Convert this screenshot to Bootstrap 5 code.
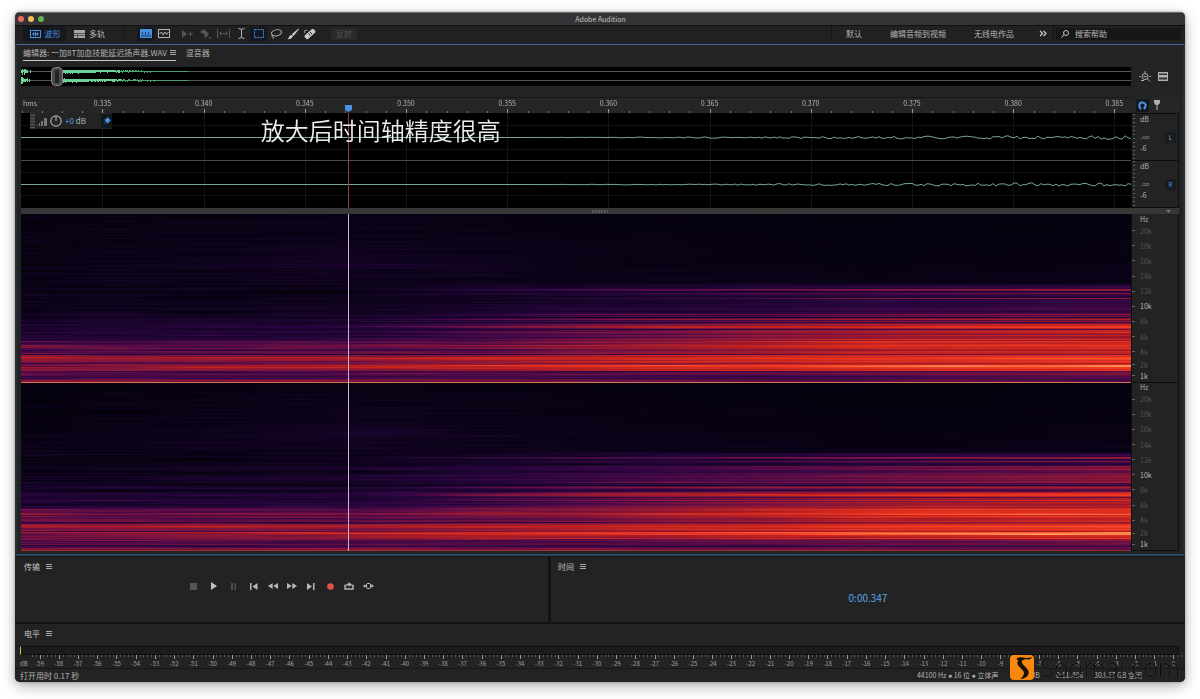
<!DOCTYPE html>
<html lang="zh-CN">
<head>
<meta charset="utf-8">
<meta name="viewport" content="width=device-width, initial-scale=1">
<title>Adobe Audition</title>
<link rel="stylesheet" href="https://cdn.jsdelivr.net/npm/bootstrap@5.3.0/dist/css/bootstrap.min.css">
<style>
  :root { --panel:#232323; --edge:#141414; --ink:#b4b4b4; --dim:#555; --blue:#4b8fe0; }
  body { background:#fff; color:var(--ink); font:8px/12px "Noto Sans CJK SC","Noto Sans",sans-serif; min-height:100vh; padding:12px 15px 17px; display:flex; }
  .app { flex:1; min-width:0; background:var(--edge); border-radius:5px; overflow:hidden; }
  .app-shadow { border-radius:5px; box-shadow:0 4px 14px rgba(0,0,0,.32),0 0 3px rgba(0,0,0,.3); }
  .titlebar { height:13px; background:#353336; border-top:1px solid #6a696b; color:#c4c4c4; font-size:7px; line-height:11px; padding-left:3px; }
  .titlebar .title { padding-right:28px; }
  .dot { width:6px; height:6px; border-radius:50%; }
  .toolbar { height:19px; background:#212121; border-top:1px solid #111; padding-bottom:3px; }
  button { border:0; background:none; color:inherit; padding:0; display:inline-flex; align-items:center; justify-content:center; }
  svg { display:block; flex:none; }
  .mode { height:15px; gap:4px; font-size:8px; }
  .mode.on { background:#15181d; color:var(--blue); width:42px; }
  .tool { width:18px; height:14px; }
  .tool.slim { width:17px; }
  .tool.on { background:#121820; color:var(--blue); }
  .off { color:#555; }
  .vline { width:1px; align-self:stretch; background:#161616; }
  .ghost { width:26px; height:12px; background:#2a2a2a; color:#565656; border-radius:2px; }
  .spaces { gap:28px; }
  .find { width:125px; height:12px; background:#171717; padding-left:5px; gap:6px; }
  .find input { background:none; border:0; outline:0; color:#ccc; font:inherit; width:90px; padding:0; }
  .find input::placeholder { color:#bbb; opacity:1; }
  .editor { background:var(--panel); border:2px solid #22313e; border-top:1px solid #42679c; border-bottom-color:#2b4961; padding:0 4px 3px; }
  .tabs { height:22px; gap:10px; padding-left:2px; }
  .tab-on { border-bottom:1px solid #c8c8c8; height:16px; gap:3px; }
  .tabs a, .tabs a:hover { color:inherit; text-decoration:none; line-height:14px; }
  .lane { display:grid; grid-template-columns:minmax(0,1fr) 48px; }
  .plot { position:relative; min-width:0; overflow:hidden; }
  .plot canvas { position:absolute; inset:0; width:100%; height:100%; }
  .overview { height:19px; }
  .ruler { height:16px; margin-top:11px; background:#262626; }
  .ruler .plot { border-top:1px solid #181818; }
  .marks { position:relative; display:flex; line-height:11px; }
  .marks span { width:9.117%; flex:none; text-align:center; font-size:7px; }
  .marks .unit { width:2.78%; text-align:left; padding-left:2px; }
  .wave { height:95px; }
  .scale { border:1px solid #0c0c0c; background:var(--panel); }
  .scale > div { flex:1 1 0; }
  .scale > div + div { border-top:1px solid #0c0c0c; }
  .db { padding-left:8px; line-height:11px; font-size:7px; background:repeating-linear-gradient(#666 0 1px,transparent 1px 4px) 1px 0/2px 100% no-repeat; }
  .db .inf { margin-top:7px; color:#888; }
  .chan { width:11px; height:11px; background:#171b22; color:#9aa8bd; font-size:6px; margin-right:2px; }
  .chan.r { color:#5a8be0; }
  .hud { position:relative; width:82px; height:16px; margin-left:9px; background:#232323; }
  .grip { width:5px; height:16px; background:repeating-linear-gradient(#333 0 2px,#555 2px 3px); }
  .caption { position:absolute; left:21.6%; top:0; font-size:24px; line-height:34px; font-weight:350; color:#ededed; white-space:nowrap; }
  .splitter { height:6px; background:#373737; color:#777; }
  .nub { width:16px; height:3px; background:repeating-linear-gradient(90deg,#555 0 2px,#3c3c3c 2px 3px); }
  .spectral { flex:1 0 336px; }
  .hz { display:flex; flex-direction:column; padding-left:8px; font-size:7px; line-height:8px; color:var(--dim); }
  .hz span { flex:15 1 0; display:flex; align-items:center; position:relative; }
  .hz span::before { content:""; width:3px; height:1px; background:#666; margin:0 5px 0 -8px; }
  .hz .head { flex:9 1 0; color:var(--ink); }
  .hz .head::before { background:none; }
  .hz .low { flex:11 1 0; }
  .hz .lit { color:#bdbdbd; }
  .docks { height:65px; gap:3px; margin-top:1px; }
  .dock { background:var(--panel); }
  .dock-title { padding:4px 0 0 9px; gap:6px; color:#c4c4c4; }
  .transport { gap:1px; padding-left:169px; margin-top:7px; }
  .transport button { width:19px; height:12px; }
  .transport button:nth-child(n+5) { width:18px; }
  .clock { color:#5ba3ec; font-size:10px; line-height:14px; margin-top:18px; text-align:center; }
  .levels { background:var(--panel); margin-top:2px; }
  .meter { height:9px; background:#1b1b1b; border:1px solid #0e0e0e; margin:6px 6px 0 5px; border-left:1px solid #c9c03a; }
  .dbruler { padding:0 2px 0 5px; }
  .dbruler .plot { height:4px; }
  .dbmarks { display:flex; font-size:6px; line-height:9px; color:#a0a0a0; }
  .dbmarks span { flex:1 1 0; text-align:center; min-width:0; }
  .dbmarks .unit { flex:none; width:10px; text-align:left; }
  .status { height:14px; background:var(--panel); border-top:1px solid #171717; padding:0 43px 0 5px; }
  .facts { font-size:7px; }
  .bullet { font-family:"Liberation Sans",sans-serif; }
  .brand { position:absolute; right:5px; bottom:2px; gap:6px; }
  .brand-name { font:300 25px/26px "Noto Sans","Noto Sans CJK SC",sans-serif; color:#080808; opacity:.85; text-shadow:0 0 1px #666; }
</style>
</head>
<body>
<div class="d-flex flex-fill app-shadow position-relative">
<main class="app d-flex flex-column">
  <header class="titlebar d-flex align-items-center">
    <div class="d-flex" style="gap:4px">
      <span class="dot" style="background:#ec6a5e"></span><span class="dot" style="background:#f4bf61"></span><span class="dot" style="background:#62b656"></span>
    </div>
    <div class="title flex-fill text-center">Adobe Audition</div>
  </header>

  <nav class="toolbar d-flex align-items-center" aria-label="工具栏">
    <div class="vline ms-2"></div>
    <button class="mode on"><svg width="11" height="8" viewBox="0 0 11 8" fill="none" stroke="currentColor"><rect x=".5" y=".5" width="10" height="7"/><path d="M2 4h7M3.500 2.500v3M5.500 1.500v5M7.500 2.500v3"/></svg>波形</button>
    <button class="mode ms-2"><svg width="11" height="8" viewBox="0 0 11 8"><path fill="#a8a8a8" d="M0 0h11v8H0z"/><path stroke="#555" d="M0 3.500h11M0 5.500h11M3.500 3v5"/></svg>多轨</button>
    <div class="vline" style="margin-left:19px"></div>
    <div class="d-flex" style="margin-left:12px">
      <button class="tool on" aria-label="频谱"><svg width="12" height="9" viewBox="0 0 12 9"><path fill="currentColor" d="M0 0h12v9H0z"/><path fill="#2a5fa6" d="M1 5.500h10V8H1z"/><path stroke="#173a69" d="M2.500 3v2M5.500 3v2M8.500 3v2"/></svg></button>
      <button class="tool" aria-label="音高"><svg width="12" height="9" viewBox="0 0 12 9" fill="none" stroke="currentColor"><rect x=".5" y=".5" width="11" height="8"/><path d="M1.500 5l2-2 1.500 3 2-3 1.500 2.500L10.500 3"/></svg></button>
    </div>
    <div class="d-flex" style="margin-left:5px">
      <button class="tool off" aria-label="移动"><svg width="13" height="10" viewBox="0 0 13 10" fill="currentColor"><path d="M1 1l5 4-5 4zM7 4.500h5v1H7z"/><path d="M9 2.500h1v5H9z"/></svg></button>
      <button class="tool off" aria-label="切断"><svg width="12" height="11" viewBox="0 0 12 11"><path fill="currentColor" d="M1 4l4-3 5 5-3 4-2-2 1-1zM9 9h3v2z"/></svg></button>
      <button class="tool off" aria-label="滑动"><svg width="13" height="9" viewBox="0 0 13 9" fill="none" stroke="currentColor"><path d="M.5 0v9M12.500 0v9M2 4.500h9M4.500 2.500l-2 2 2 2M8.500 2.500l2 2-2 2"/></svg></button>
      <button class="tool" aria-label="时间选择"><svg width="7" height="11" viewBox="0 0 7 11" fill="none" stroke="currentColor"><path d="M.5.5Q3.500.5 3.500 2.500v6q0 2-3 2M6.500.5q-3 0-3 2M3.500 8.500q0 2 3 2"/></svg></button>
    </div>
    <div class="d-flex">
      <button class="tool slim on" aria-label="框选"><svg width="10" height="9" viewBox="0 0 10 9" fill="none" stroke="currentColor"><rect x=".5" y=".5" width="9" height="8" stroke-dasharray="2 1"/></svg></button>
      <button class="tool slim" aria-label="套索"><svg width="12" height="10" viewBox="0 0 12 10" fill="none" stroke="currentColor"><ellipse cx="6.500" cy="3.800" rx="5" ry="3" transform="rotate(-12 6.500 3.800)"/><path d="M2.500 6q-1.500 1.500.5 2t-.5 2"/></svg></button>
      <button class="tool slim" aria-label="画笔"><svg width="12" height="12" viewBox="0 0 12 12" fill="#d0d0d0"><path d="M11.500.5L12 1 6.500 8 4.800 6.300zM4.200 6.800l1.800 1.800Q4.500 11.500.5 11.200 2.500 9.500 2.500 8z"/></svg></button>
      <button class="tool slim" aria-label="污点修复"><svg width="12" height="12" viewBox="0 0 12 12"><rect x="3.500" y="0" width="5" height="12" rx="1.500" fill="#c8c8c8" transform="rotate(48 6 6)"/><path stroke="#222" d="M4.500 5.500l2 2M6 4l2 2"/><path d="M.5 5V2.500h3" stroke="#888" fill="none"/></svg></button>
    </div>
    <button class="ghost" style="margin-left:13px" disabled>反转</button>
    <div class="d-flex align-items-center ms-auto spaces align-self-stretch">
      <div class="vline" style="margin-right:-14px"></div>
      <a class="text-reset text-decoration-none" href="#">默认</a>
      <a class="text-reset text-decoration-none" href="#">编辑音频到视频</a>
      <a class="text-reset text-decoration-none" href="#">无线电作品</a>
    </div>
    <button style="margin:0 6px 0 25px" aria-label="更多工作区"><svg width="8" height="7" viewBox="0 0 8 7" fill="none" stroke="#ccc" stroke-width="1.200"><path d="M1 1l2.500 2.500L1 6M4.500 1l2.500 2.500L4.500 6"/></svg></button>
    <div class="vline"></div>
    <label class="find d-flex align-items-center" style="margin:0 4px 0 2px"><svg width="8" height="8" viewBox="0 0 8 8" fill="none" stroke="#c0c0c0"><circle cx="5" cy="3" r="2.500"/><path d="M3.200 4.800L.5 7.700"/></svg><input type="text" placeholder="搜索帮助" aria-label="搜索帮助"></label>
  </nav>

  <section class="editor d-flex flex-column flex-fill">
    <div class="tabs d-flex">
      <div class="tab-on d-flex align-items-center"><a href="#">编辑器: 一加8T加血技能延迟扬声器.WAV</a><button aria-label="菜单"><svg width="6" height="6" viewBox="0 0 6 6" stroke="#aaa"><path d="M0 .5h6M0 2.500h6M0 4.500h6"/></svg></button></div>
      <a href="#" style="padding-top:1px">混音器</a>
    </div>

    <div class="lane overview">
      <div class="plot"><canvas id="overview"></canvas></div>
      <div class="d-flex align-items-center" style="gap:7px;padding-left:8px">
        <button aria-label="全部缩小"><svg width="12" height="11" viewBox="0 0 12 11" fill="none" stroke="#b0b0b0"><circle cx="6" cy="5.500" r="3"/><path d="M8 7.500l3 3M4.500 5.500h3M0 5.500h1.500M10.500 5.500H12M6 0v2M2 9.500h3"/></svg></button>
        <button aria-label="视图列表"><svg width="10" height="9" viewBox="0 0 10 9"><path fill="#b0b0b0" d="M0 0h10v9H0z"/><path fill="#333" d="M1 1.500h8v1.500H1zM1 5.500h8v2H1z"/></svg></button>
      </div>
    </div>

    <div class="lane ruler">
      <div class="plot"><canvas id="ruler"></canvas><div class="marks" id="times"><span class="unit">hms</span></div></div>
      <div class="d-flex align-items-center" style="gap:2px;padding-left:5px">
        <button class="tool on" style="width:13px;height:13px" aria-label="对齐"><svg width="9" height="9" viewBox="0 0 9 9"><path d="M3 8Q.8 6 1.500 3.500T4.500 1.500t3 2T6 8" fill="none" stroke="currentColor" stroke-width="2.200"/></svg></button>
        <button class="tool" style="width:11px" aria-label="标记"><svg width="6" height="10" viewBox="0 0 6 10" fill="#b0b0b0"><path d="M0 0h6v3L4 5H2L0 3zM2.500 5h1v5h-1z"/></svg></button>
      </div>
    </div>

    <div class="lane wave">
      <div class="plot bg-black"><canvas id="wave"></canvas>
        <div class="hud d-flex align-items-center">
          <span class="grip" style="margin-right:2px"></span>
          <svg width="10" height="9" viewBox="0 0 10 9" fill="#777"><path d="M0 8h1v1H0zM2 6h1v3H2zM4 4h2v5H4zM7 1h3v8H7z"/></svg>
          <svg style="margin-left:3px" width="12" height="12" viewBox="0 0 12 12" fill="none" stroke="#a8a8a8" stroke-width="1.200"><circle cx="6" cy="6" r="5.200"/><path d="M6 1v5"/></svg>
          <span style="margin-left:3px"><span style="color:#5ba3ec">+0</span> dB</span>
          <button class="tool on ms-auto" style="width:11px" aria-label="固定"><svg width="8" height="8" viewBox="0 0 8 8" fill="currentColor"><path d="M4.500 0L8 3.500l-1 .5-1.500 1.500v1.500L3.300 5 0 8l2.800-3.500L1 2.500h1.500L4 1z"/></svg></button>
        </div>
        <div class="caption">放大后时间轴精度很高</div>
      </div>
      <div class="scale d-flex flex-column">
        <div class="db d-flex justify-content-between align-items-center"><div class="align-self-start"><div>dB</div><div class="inf">-∞</div><div>-6</div></div><button class="chan">L</button></div>
        <div class="db d-flex justify-content-between align-items-center"><div class="align-self-start"><div>dB</div><div class="inf">-∞</div><div>-6</div></div><button class="chan r">R</button></div>
      </div>
    </div>

    <div class="splitter d-flex align-items-center justify-content-center position-relative"><span class="nub"></span>
      <svg class="position-absolute end-0 me-2" width="5" height="3" viewBox="0 0 5 3"><path fill="#777" d="M0 0h5L2.500 3z"/></svg></div>

    <div class="lane spectral">
      <div class="plot bg-black"><canvas id="spectrum"></canvas></div>
      <div class="scale d-flex flex-column border-top-0"><div class="hz"></div><div class="hz"></div></div>
    </div>
  </section>

  <div class="docks d-flex">
    <section class="dock" style="flex:533 1 0">
      <div class="dock-title d-flex align-items-center">传输<button aria-label="菜单"><svg width="6" height="6" viewBox="0 0 6 6" stroke="#aaa"><path d="M0 .5h6M0 2.500h6M0 4.500h6"/></svg></button></div>
      <div class="transport d-flex">
        <button aria-label="停止"><svg width="7" height="7"><path fill="#555" d="M0 0h7v7H0z"/></svg></button>
        <button aria-label="播放"><svg width="6" height="8"><path fill="#c0c0c0" d="M0 0l6 4-6 4z"/></svg></button>
        <button aria-label="暂停"><svg width="5" height="7"><path fill="#505050" d="M0 0h2v7H0zM3.500 0h2v7h-2z"/></svg></button>
        <button aria-label="到开头"><svg width="8" height="7"><path fill="#b8b8b8" d="M0 0h1.500v7H0zM7.500 0v7L2.500 3.500z"/></svg></button>
        <button aria-label="快退"><svg width="10" height="6"><path fill="#b8b8b8" d="M4.700 0v6L0 3zM10 0v6L5.300 3z"/></svg></button>
        <button aria-label="快进"><svg width="10" height="6"><path fill="#b8b8b8" d="M0 0v6l4.700-3zM5.300 0v6L10 3z"/></svg></button>
        <button aria-label="到结尾"><svg width="8" height="7"><path fill="#b8b8b8" d="M0 0v7l5-3.500zM6 0h1.500v7H6z"/></svg></button>
        <button aria-label="录音"><svg width="7" height="7"><circle cx="3.500" cy="3.500" r="3.300" fill="#e0524e"/></svg></button>
        <button aria-label="循环"><svg width="10" height="8" viewBox="0 0 10 8"><path fill="none" stroke="#b8b8b8" stroke-width="1.400" d="M2.500 3.500H1V7h8V3.500H7.500M2.500 2.500H5"/><path fill="#b8b8b8" d="M4.500 0L8 2.500l-3.500 2.500z"/></svg></button>
        <button aria-label="跳过"><svg width="11" height="8" viewBox="0 0 11 8"><path fill="none" stroke="#b8b8b8" d="M4 1.500h3M4 6.500h3M3.500 2v4M7.500 2v4M0 4h3M8 4h2"/><path fill="#b8b8b8" d="M8.500 2L11 4 8.500 6zM1 2.500L3.500 4 1 5.500z"/></svg></button>
      </div>
    </section>
    <section class="dock" style="flex:634 1 0">
      <div class="dock-title d-flex align-items-center" style="padding-left:7px">时间<button aria-label="菜单"><svg width="6" height="6" viewBox="0 0 6 6" stroke="#aaa"><path d="M0 .5h6M0 2.500h6M0 4.500h6"/></svg></button></div>
      <div class="clock">0:00.347</div>
    </section>
  </div>

  <section class="levels">
    <div class="dock-title d-flex align-items-center">电平<button aria-label="菜单"><svg width="6" height="6" viewBox="0 0 6 6" stroke="#aaa"><path d="M0 .5h6M0 2.500h6M0 4.500h6"/></svg></button></div>
    <div class="meter"></div>
    <div class="dbruler"><div class="plot"><canvas id="dbticks"></canvas></div><div class="dbmarks" id="levels"><span class="unit">dB</span></div></div>
  </section>

  <footer class="status d-flex align-items-center">
    <span class="me-auto">打开用时 0.17 秒</span>
    <div class="facts d-flex"><span>44100 Hz <span class="bullet">●</span> 16 位 <span class="bullet">●</span> 立体声</span><span style="margin-left:16px">1.92 MB</span><span style="margin-left:16px">0:11.406</span><span style="margin-left:11px">308.67 GB 空闲</span></div>
  </footer>
</main>
<div class="brand d-flex align-items-center">
  <svg width="24" height="25" viewBox="0 0 24 25"><rect width="24" height="25" rx="4" fill="#f8890c"/><path fill="#1a1208" d="M6.500 3.500Q9 1.500 13 2.500t9-.5q-1 2.500-4 2.500-3-.5-5 .5t-1 3q1 2 4 4.500 5 5 1 9-3 2.500-7 2.500 4-3 4-6 0-2-4-5.500-4-3.500-2-6.500Q9 4.500 7.500 5.500z"/></svg>
  <span class="brand-name">Soomal.com</span>
</div>
</div>

<script src="https://cdn.jsdelivr.net/npm/bootstrap@5.3.0/dist/js/bootstrap.bundle.min.js"></script>
<script>
const times = document.getElementById('times');
for (let i = 0; i < 11; i++) times.insertAdjacentHTML('beforeend', `<span>${(0.335 + i * 0.005).toFixed(3)}</span>`);
const levels = document.getElementById('levels');
for (let d = -59; d <= 0; d++) levels.insertAdjacentHTML('beforeend', `<span>${d}</span>`);
document.querySelectorAll('.hz').forEach(el => {
  el.innerHTML = '<span class="head">Hz</span>' + [20,18,16,14,12,10,8,6,4,2,1].map(k =>
    `<span class="${k < 3 ? 'low ' : ''}${k === 10 || k === 1 ? 'lit' : ''}">${k}k</span>`).join('');
});

const FIRST = 0.0734, STEP = 0.09117, HEAD = 0.2946;
function rng(seed) { return () => { seed = (seed * 1664525 + 1013904223) >>> 0; return seed / 4294967296; }; }
function surface(id) {
  const c = document.getElementById(id);
  c.width = c.clientWidth; c.height = c.clientHeight;
  return [c.getContext('2d'), c.width, c.height];
}
function bar(g, color, x, y, w, h) { g.fillStyle = color; g.fillRect(x, y, w, h); }

function drawOverview() {
  const [g, w, h] = surface('overview'), r = rng(5);
  bar(g, '#000', 0, 0, w, h);
  for (const y of [4, 13]) {
    bar(g, '#4c5a52', 0, y, w, 1);
    for (let x = 0; x < w * 0.15; x++) {
      let a = 0;
      if (x < 11) a = 3.5 * (1 - x / 13) * r();
      if (x > 41) a = 1.5 * Math.exp(-(x - 41) / 75) * (0.6 + r() / 2);
      if (a > 0.45) bar(g, x < 100 ? '#6fd29b' : '#4da874', x, Math.round(y - a), 1, Math.round(2 * a) + 1);
      else if (x > 41) bar(g, '#4d9d70', x, y, 1, 1);
    }
  }
  g.fillStyle = '#4a4a4a'; g.strokeStyle = '#8a8a8a';
  g.beginPath(); g.roundRect(30.5, .5, 11, 18, 4); g.fill(); g.stroke();
  bar(g, '#242424', 34, 3, 4, 13);
}

function drawRuler() {
  const [g, w, h] = surface('ruler');
  for (let i = -4; i <= 51; i++) {
    const major = i % 5 === 0, x = Math.round(w * (FIRST + STEP * i / 5));
    bar(g, major ? '#999' : '#777', x, h - (major ? 4 : 2), 1, 4);
  }
  const x = Math.round(w * HEAD);
  g.fillStyle = '#4b8fe0';
  g.beginPath(); g.moveTo(x - 3, 7); g.lineTo(x + 4, 7); g.lineTo(x + 4, 12); g.lineTo(x + .5, 14); g.lineTo(x - 3, 12); g.fill();
}

function drawWave() {
  const [g, w, h] = surface('wave'), r = rng(11);
  bar(g, '#000', 0, 0, w, h);
  for (const y of [12, 36, 59, 82]) bar(g, '#101410', 0, y, w, 1);
  for (let i = 0; i < 11; i++) bar(g, '#0d1a0d', Math.round(w * (FIRST + STEP * i)), 0, 1, h);
  bar(g, '#484c4a', 0, 47, w, 1);
  for (const y of [24.5, 71.5]) {
    g.beginPath(); g.moveTo(0, y);
    let v = 0;
    for (let x = 0; x < w + 3; x += 3) {
      const t = Math.max(0, x / w - 0.45) * 1.8;
      v = v * 0.1 + (r() - 0.5) * 2;
      g.lineTo(x, y + v * 2 * t);
    }
    g.strokeStyle = '#76a892'; g.lineWidth = 1; g.stroke();
  }
  bar(g, '#a03840', Math.round(w * HEAD), 0, 1, h);
}

// strength of the signal at five times, by distance from the top of a channel of 168 rows
const KEYX = [0, 0.29, 0.52, 0.78, 1];
const BANDS = [
  [0,.07,.09,.07,.06,.07],[40,.08,.15,.10,.07,.09],[50,.08,.20,.10,.08,.10],[56,.10,.16,.11,.09,.10],
  [69,.12,.13,.13,.11,.11],[71,.11,.13,.24,.33,.36],[84,.11,.13,.22,.30,.34],[97,.13,.15,.25,.34,.38],
  [101,.18,.20,.38,.46,.50],[108,.24,.26,.42,.54,.58],[110,.25,.28,.56,.72,.80],[114,.24,.30,.56,.72,.82],
  [118,.22,.25,.44,.62,.70],[124,.26,.28,.46,.62,.64],[127,.46,.42,.58,.80,.80],[133,.50,.48,.62,.80,.84],
  [137,.42,.38,.48,.66,.70],[141,.54,.50,.64,.74,.78],[143,.60,.60,.70,.79,.85],[150,.56,.66,.76,.84,.88],
  [154,.52,.60,.66,.72,.76],[157,.44,.40,.42,.46,.50],[163,.36,.36,.36,.40,.44],[165,.55,.54,.50,.50,.44],[168,.60,.60,.52,.5,.46]
];
const LINES = [
  [74,.10,.12,.44,.58,.64],[75,.10,.12,.40,.52,.58],[78,.10,.12,.38,.50,.56],[83,.12,.16,.36,.54,.64],[99,.20,.20,.48,.56,.60],
  [104,.22,.26,.56,.66,.68],[111,.26,.34,.66,.80,.88],[112,.24,.32,.66,.82,.89],[117,.34,.32,.56,.70,.80],
  [130,.52,.50,.68,.86,.86],[142,.66,.68,.72,.82,.88],[146,.52,.50,.76,.83,.90],[150,.56,.74,.86,.94,.98],
  [151,.50,.68,.82,.94,1],[155,.56,.60,.72,.82,.86],[102,.08,.10,.18,.24,.28],[107,.12,.14,.26,.32,.36],
  [114,.20,.22,.32,.42,.48],[139,.26,.26,.38,.52,.56],[148,.42,.46,.60,.68,.70]
];
const COLORS = [[0,2,2,7],[.1,8,2,20],[.2,22,4,40],[.32,42,5,64],[.44,80,10,72],[.55,126,20,62],[.66,162,26,42],[.76,204,38,30],[.88,240,58,36],[.95,250,92,50],[1,255,160,90]];
function mix(table, v, col) {
  let i = 0;
  while (i < table.length - 2 && v > table[i + 1][0]) i++;
  const a = table[i], b = table[i + 1], t = Math.min(1, Math.max(0, (v - a[0]) / (b[0] - a[0])));
  return a[col] + (b[col] - a[col]) * t;
}
const LUT = Array.from({length: 256}, (_, i) => [1, 2, 3].map(c => mix(COLORS, i / 255, c)));

function drawSpectrum() {
  const [g, w, h] = surface('spectrum');
  const img = g.createImageData(w, h), half = h / 2, r = rng(77);
  for (let y = 0; y < h; y++) {
    const ch = y < half ? 0 : 1, row = (y - ch * half) * 168 / half, key = Math.floor(row);
    const line = LINES.find(l => l[0] === key);
    const lift = x => ch ? (row > 84 && row < 100 ? .18 * x : row > 124 ? .03 : 0) : 0;
    const keys = KEYX.map((x, i) => [x, (line ? line[i + 1] : mix(BANDS, row, i + 1)) + (line ? 0 : lift(x))]);
    const level = keys[4][1];
    const jitter = line ? 0 : (r() - 0.5) * (0.035 + 0.32 * Math.max(0, Math.min(level, .6) - .1));
    const knots = Array.from({length: 14}, () => r() - 0.5), amp = row < 70 ? 0.12 : 0.16;
    for (let x = 0; x < w; x++) {
      const u = x / w, p = u * 12, k = Math.floor(p), f = p - k, s = f * f * (3 - 2 * f);
      let v = mix(keys, u, 1);
      v += jitter * (.35 + .65 * Math.min(1, v * 1.6)) + (knots[k] * (1 - s) + knots[k + 1] * s) * amp * (1 - .7 * u);
      const c = LUT[Math.max(0, Math.min(255, Math.round(v * 255)))], o = (y * w + x) * 4;
      img.data[o] = c[0]; img.data[o + 1] = c[1]; img.data[o + 2] = c[2]; img.data[o + 3] = 255;
    }
  }
  g.putImageData(img, 0, 0);
  bar(g, '#d0704c', 0, Math.round(half) - 1, w, 1);
  bar(g, '#a02c30', 0, h - 1, w, 1);
  bar(g, '#d2b4c8', Math.round(w * HEAD), 0, 1, h);
}

function drawLevels() {
  const [g, w] = surface('dbticks');
  const step = (w - 10) / 60;
  for (let i = -4; i < 596; i += 2)
    bar(g, i % 10 === 0 ? '#999' : '#5c5c5c', Math.round(10 + step * (i / 10 + .5)), 0, 1, i % 10 === 0 ? 4 : 2);
}
function draw() { drawOverview(); drawRuler(); drawWave(); drawSpectrum(); drawLevels(); }
draw();
addEventListener('resize', draw);
</script>
</body>
</html>
